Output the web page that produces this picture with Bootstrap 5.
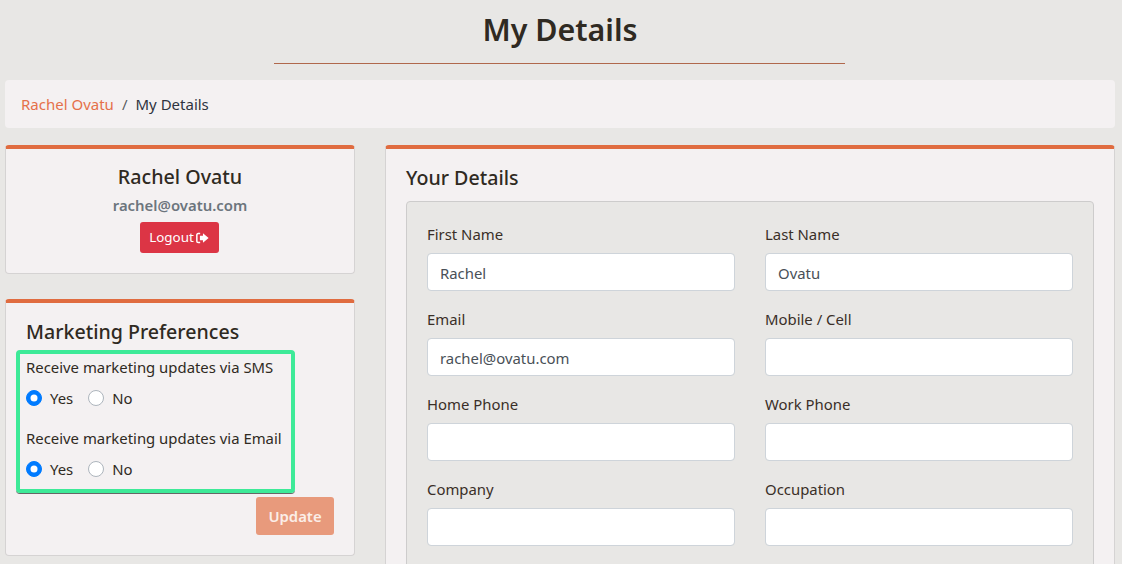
<!DOCTYPE html>
<html lang="en">
<head>
<meta charset="utf-8">
<title>My Details</title>
<link href="https://cdn.jsdelivr.net/npm/bootstrap@5.3.0/dist/css/bootstrap.min.css" rel="stylesheet">
<style>
html, body { overflow: hidden; }
body { background: #e8e7e5; font-family: "Noto Sans", "Open Sans", sans-serif; font-size: 14.9px; color: #2f2a22; }
.page-wrap { padding: 0 7px 0 5px; }
.page-title { font-size: 30.4px; font-weight: 600; line-height: 40px; margin: 10px 0 0; text-align: center; color: #2f2a22; }
.title-rule { width: 571px; height: 1px; margin: 13px auto 16px; background: #b0684c; opacity: 1; border: 0; margin-left: 269px; }
.crumbs { background: #f4f1f2; height: 48px; padding: 0 16px; border-radius: 4px; margin-bottom: 17px; align-items: center; font-size: 15px; }
.crumbs a { color: #e5704a; text-decoration: none; }
.crumbs .breadcrumb-item.active { color: #2f3440; }
.side-col { width: 350px; flex: none; }
.main-col { width: 730px; flex: none; }
.accent-card { background: #f4f1f2; border: 1px solid #d5d3d3; border-top: 4px solid #e06c40; border-radius: 4px; }
.person-card { height: 129px; padding-top: 14px; margin-bottom: 25px; text-align: center; }
.person-name { font-size: 19.7px; font-weight: 500; line-height: 28px; margin: 0 0 4px; }
.person-mail { font-size: 14.9px; font-weight: 600; color: #6c757d; line-height: 20px; margin: 0 0 7px; }
.logout-btn { font-size: 13.4px; padding: 0; width: 79px; height: 31px; line-height: 31px; border: 0; border-radius: 3px; margin-right: 2px; display: inline-flex; align-items: center; justify-content: center; gap: 2px; }
.logout-btn svg { flex: none; }
.prefs-card { height: 257px; padding: 15px 20px; position: relative; }
.card-heading { font-size: 19.6px; font-weight: 500; line-height: 28px; margin: 0 0 9px; }
.prefs-card .card-heading { margin-bottom: 11px; }
.pref-label { line-height: 20px; margin: 0 0 11px; font-size: 14.9px; }
.pref-radios { height: 20px; margin-bottom: 20px; }
.pref-radios .form-check { margin: 0 15px 0 0; padding-left: 24px; min-height: 20px; line-height: 20px; }
.pref-radios .form-check-input { width: 16px; height: 16px; margin-left: -24px; margin-top: 2px; background-color: #fff; border: 1px solid #adb5bd; }
.pref-radios .form-check-input:checked { background-color: #007bff; border-color: #007bff; }
.highlight-box { position: absolute; left: 10px; top: 47px; width: 279px; height: 143px; border: 4px solid #3dea98; border-radius: 4px; box-shadow: 0 1px 0 #666; pointer-events: none; }
.update-btn { background: #e89a7c; border: 0; color: #fbeee8; font-weight: 600; font-size: 14.9px; width: 78px; height: 38px; border-radius: 3px; position: absolute; right: 20px; top: 194px; }
.details-card { padding: 15px 20px; min-height: 600px; }
.details-panel { background: #e8e7e5; border: 1px solid #cdcccc; border-radius: 4px; padding: 20px; }
.field-label { line-height: 24px; margin: 0 0 7px; font-size: 14.9px; color: #3a2f28; }
.field-input { height: 38px; font-size: 14.9px; color: #495057; border: 1px solid #ced4da; border-radius: 4px; padding: 7px 12px 5px; font-family: inherit; }
.field-row { --bs-gutter-x: 30px; }
.field-col { margin-bottom: 16px; }
</style>
</head>
<body>
<div class="page-wrap">
  <h1 class="page-title">My Details</h1>
  <hr class="title-rule">
  <nav aria-label="breadcrumb">
    <ol class="breadcrumb crumbs d-flex">
      <li class="breadcrumb-item"><a href="#">Rachel Ovatu</a></li>
      <li class="breadcrumb-item active" aria-current="page">My Details</li>
    </ol>
  </nav>
  <div class="d-flex justify-content-between">
    <div class="side-col">
      <div class="accent-card person-card">
        <h2 class="person-name">Rachel Ovatu</h2>
        <p class="person-mail">rachel@ovatu.com</p>
        <button type="button" class="btn btn-danger logout-btn">Logout
          <svg width="13" height="12" viewBox="0 0 14 12" aria-hidden="true"><path fill="#fff" d="M7.5.8 13.6 6 7.5 11.2V8.4H4.2V3.6h3.3z"/><path fill="none" stroke="#fff" stroke-width="1.6" d="M4.5 1.2H2.4C1.4 1.2.9 1.8.9 2.6v6.8c0 .8.5 1.4 1.5 1.4h2.1"/></svg>
        </button>
      </div>
      <div class="accent-card prefs-card">
        <h3 class="card-heading">Marketing Preferences</h3>
        <p class="pref-label">Receive marketing updates via SMS</p>
        <div class="pref-radios d-flex">
          <div class="form-check"><input class="form-check-input" type="radio" name="sms" id="s1" checked><label class="form-check-label" for="s1">Yes</label></div>
          <div class="form-check"><input class="form-check-input" type="radio" name="sms" id="s2"><label class="form-check-label" for="s2">No</label></div>
        </div>
        <p class="pref-label">Receive marketing updates via Email</p>
        <div class="pref-radios d-flex">
          <div class="form-check"><input class="form-check-input" type="radio" name="em" id="e1" checked><label class="form-check-label" for="e1">Yes</label></div>
          <div class="form-check"><input class="form-check-input" type="radio" name="em" id="e2"><label class="form-check-label" for="e2">No</label></div>
        </div>
        <div class="highlight-box"></div>
        <button type="button" class="btn update-btn">Update</button>
      </div>
    </div>
    <div class="main-col">
      <div class="accent-card details-card">
        <h3 class="card-heading">Your Details</h3>
        <div class="details-panel">
          <div class="row field-row">
            <div class="col-6 field-col"><label class="field-label d-block">First Name</label><input class="form-control field-input" value="Rachel"></div>
            <div class="col-6 field-col"><label class="field-label d-block">Last Name</label><input class="form-control field-input" value="Ovatu"></div>
            <div class="col-6 field-col"><label class="field-label d-block">Email</label><input class="form-control field-input" value="rachel@ovatu.com"></div>
            <div class="col-6 field-col"><label class="field-label d-block">Mobile / Cell</label><input class="form-control field-input"></div>
            <div class="col-6 field-col"><label class="field-label d-block">Home Phone</label><input class="form-control field-input"></div>
            <div class="col-6 field-col"><label class="field-label d-block">Work Phone</label><input class="form-control field-input"></div>
            <div class="col-6 field-col"><label class="field-label d-block">Company</label><input class="form-control field-input"></div>
            <div class="col-6 field-col"><label class="field-label d-block">Occupation</label><input class="form-control field-input"></div>
          </div>
        </div>
      </div>
    </div>
  </div>
</div>
<script src="https://cdn.jsdelivr.net/npm/bootstrap@5.3.0/dist/js/bootstrap.bundle.min.js"></script>
</body>
</html>
